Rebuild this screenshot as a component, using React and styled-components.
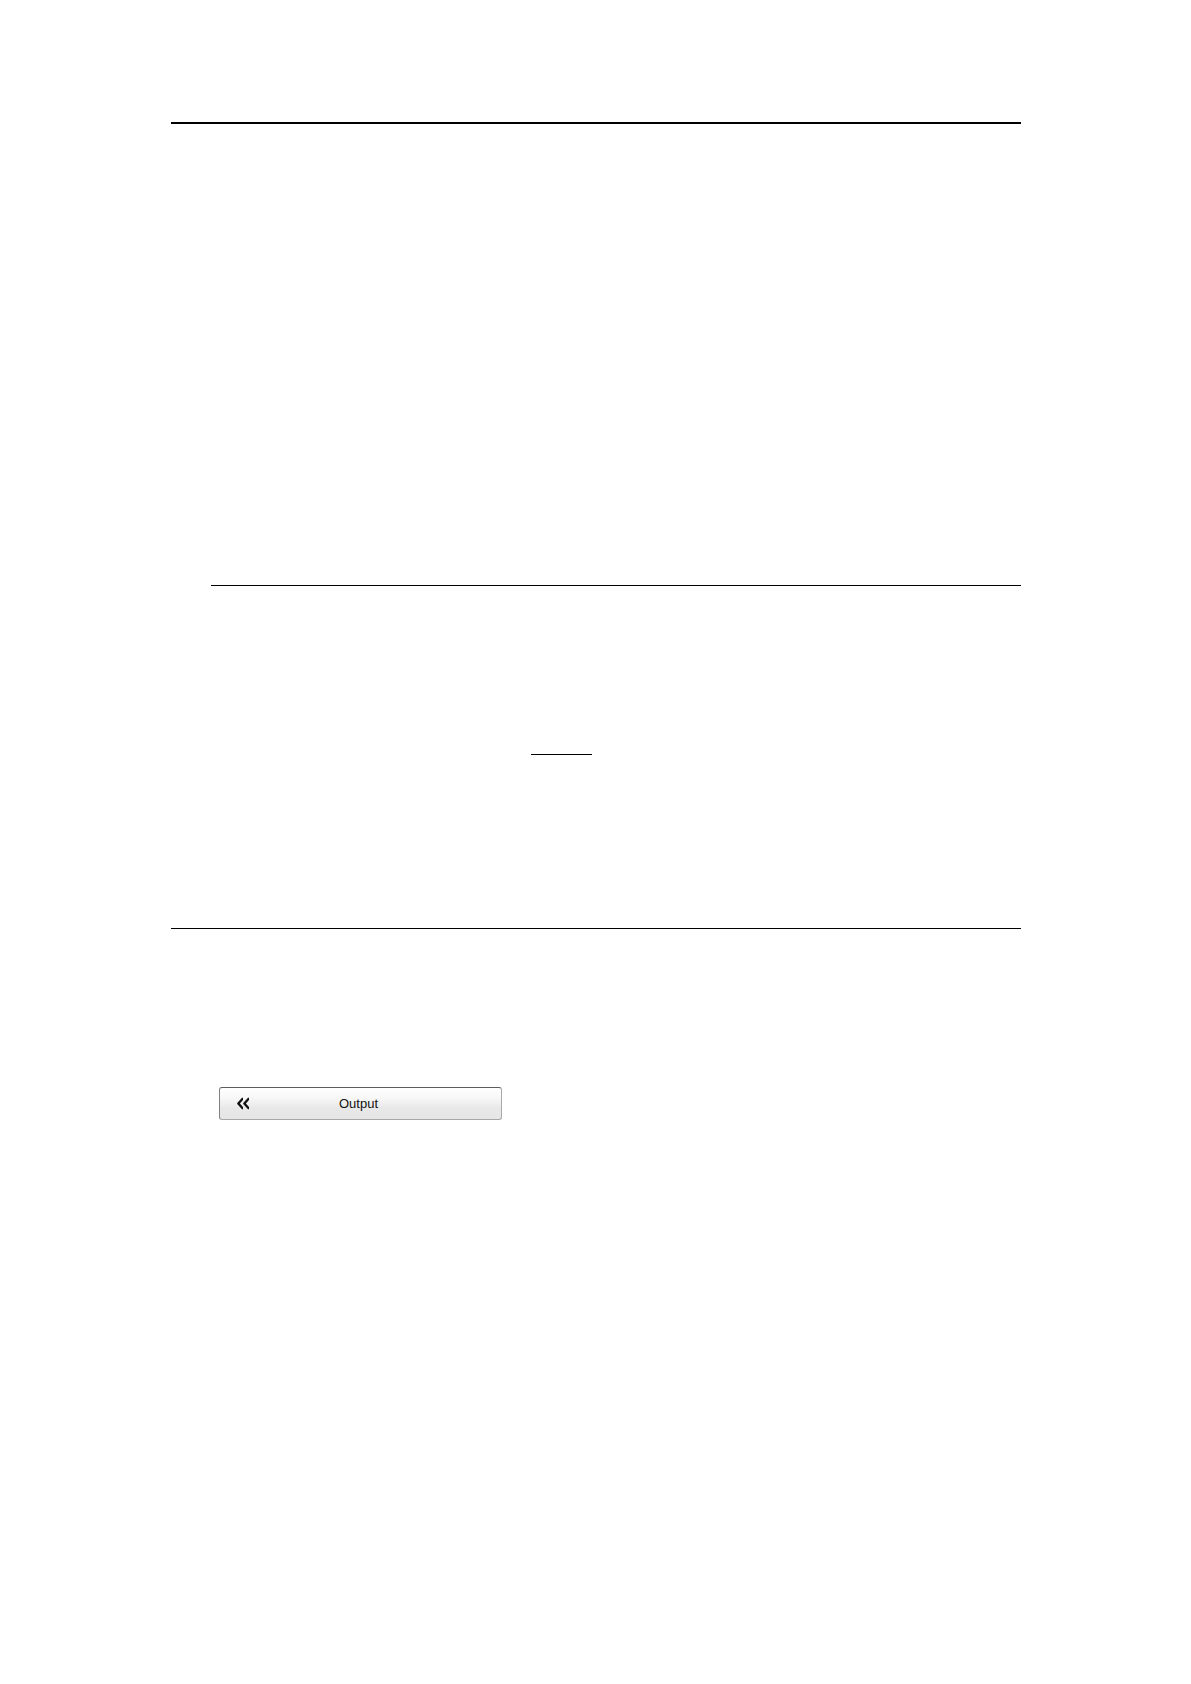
import React from 'react'
import styled, { createGlobalStyle } from 'styled-components'

const GlobalStyle = createGlobalStyle`
  body {
    margin: 0;
    background-color: #ffffff;
  }
`
const Page = styled.main`
  display: flex;
  flex-direction: column;
  padding: 122px 170px 564px 171px;
`
const Rule = styled.hr`
  width: 100%;
  height: ${(props) => props.$thick ? '2px' : '1px'};
  margin: 0;
  border: none;
  background-color: #000000;
`
const Topic = styled.section`
  display: flex;
  flex-direction: column;
  margin-top: 461px;
  padding-left: 40px;
`
const LinkLine = styled.div`
  width: 61px;
  margin-top: 168px;
  margin-left: 320px;
`
const Chapter = styled.section`
  display: flex;
  flex-direction: column;
  margin-top: 173px;
`
const Content = styled.div`
  padding: 158px 48px 0;
`
const MenuButton = styled.button`
  display: grid;
  grid-template-columns: 16px 1fr 16px;
  align-items: center;
  width: 283px;
  height: 33px;
  padding: 0 20px 0 16px;
  border: 1px solid #a8a8a8;
  border-top-color: #5c5c5c;
  border-left-color: #808080;
  border-radius: 3px;
  background: linear-gradient(#ffffff 0%, #f8f8f8 30%, #e8e8e8 65%, #e6e6e6 100%);
  color: #111111;
  font-family: "Liberation Sans", Arial, sans-serif;
  font-size: 13px;
  line-height: 16px;
  cursor: pointer;
`
const Label = styled.span`
  text-align: center;
`

const BackIcon = () => {
  return (
    <svg width="16" height="14" viewBox="0 0 16 14" fill="#111111" aria-hidden="true">
      <path d="M6 0.8H7V3L3.9 6.5L7 10V12.2H6L1.2 7.1V5.9Z" />
      <path d="M12 0.8H13V3L9.9 6.5L13 10V12.2H12L7.2 7.1V5.9Z" />
    </svg>
  )
}

const App = () => {
  return (
    <>
      <GlobalStyle />
      <Page>
        <Rule $thick />
        <Topic>
          <Rule />
          <LinkLine>
            <Rule />
          </LinkLine>
        </Topic>
        <Chapter>
          <Rule />
          <Content>
            <MenuButton type="button">
              <BackIcon />
              <Label>Output</Label>
            </MenuButton>
          </Content>
        </Chapter>
      </Page>
    </>
  )
}

export default App
